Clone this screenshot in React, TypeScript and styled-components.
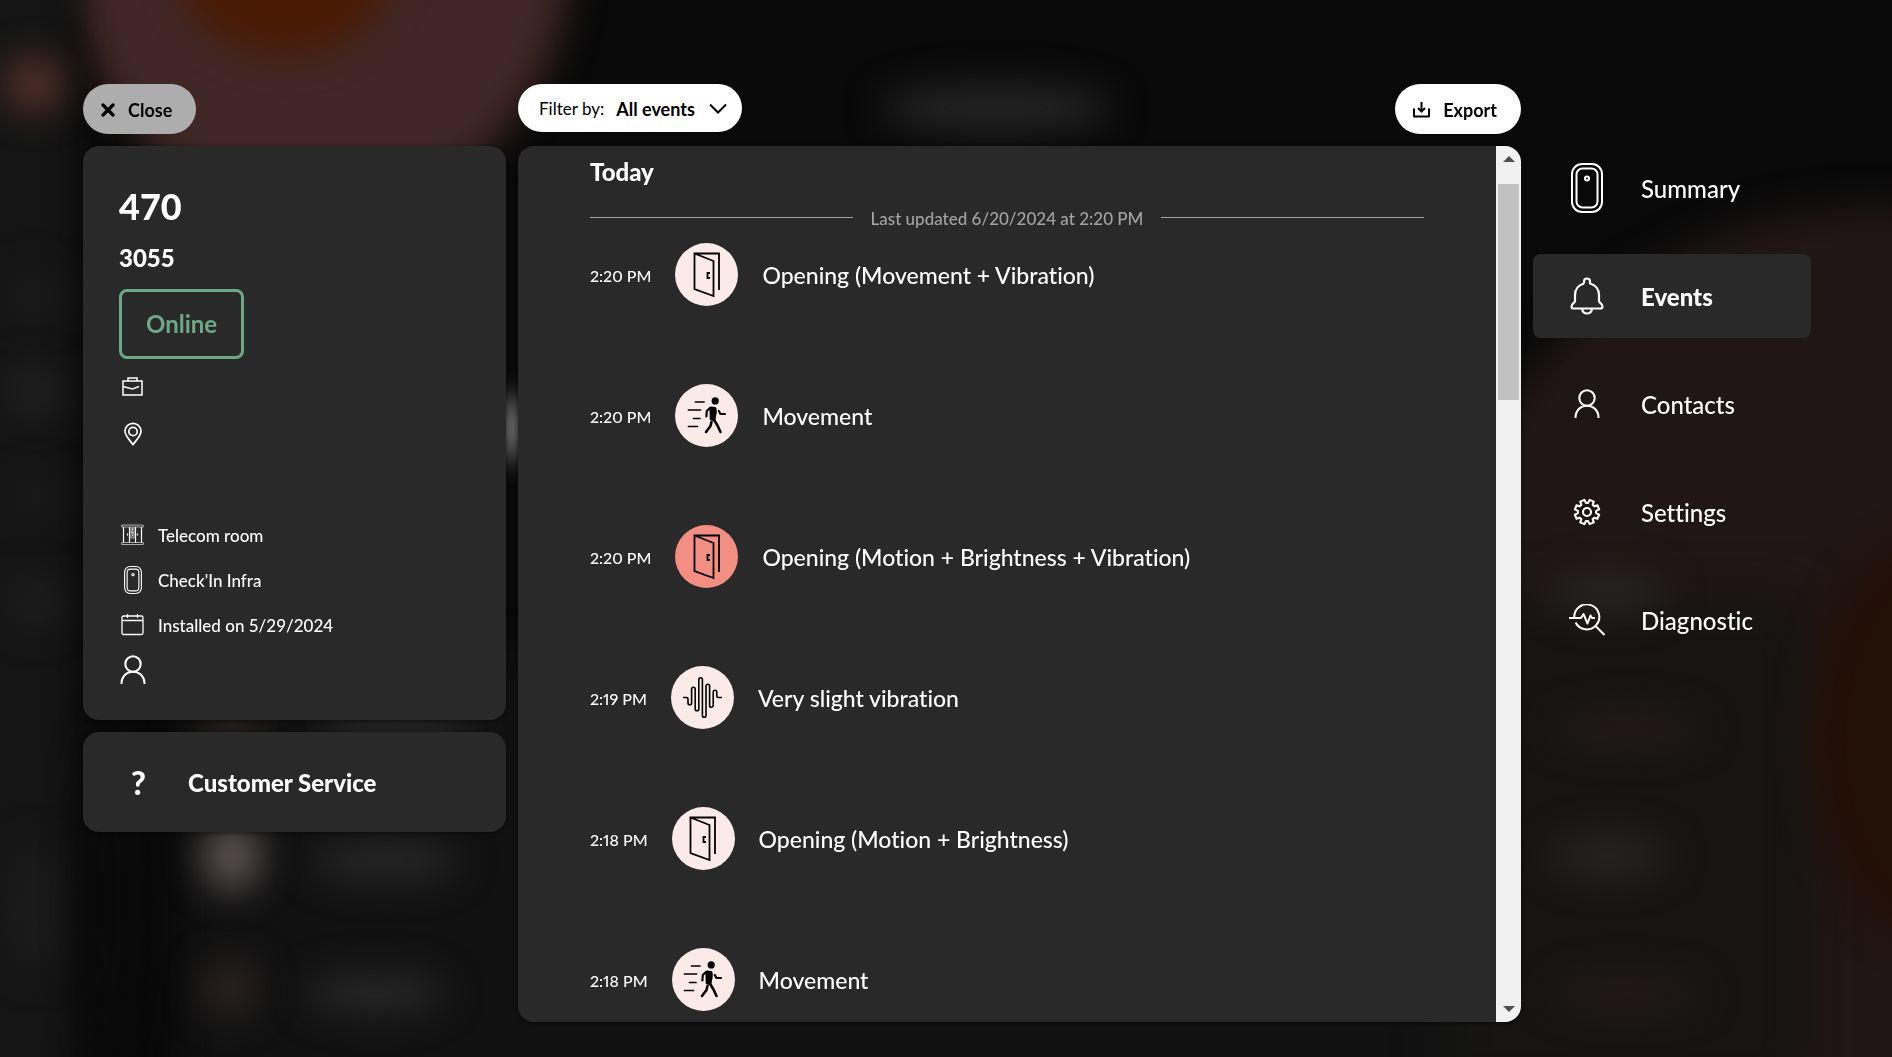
import React from 'react';
import styled, { createGlobalStyle } from 'styled-components';

const GlobalStyle = createGlobalStyle`
  *, *::before, *::after { box-sizing: border-box; }
  body {
    margin: 0;
    background: #090909;
    color: #fff;
    font-family: Lato, "Open Sans", sans-serif;
    font-size: 17px;
    font-weight: 500;
    font-variant-ligatures: none;
    line-height: 24px;
  }
  button, select { font: inherit; color: inherit; }
  h1, h2, p, ul, ol { margin: 0; padding: 0; }
  ul, ol { list-style: none; }
  svg { display: block; }
`;

/* ---------- blurred page behind the dialog ---------- */

const Backdrop = styled.div`
  position: fixed;
  inset: 0;
  overflow: hidden;
  background: #090909;
`;

interface GlowProps {
  $x: string;
  $y: string;
  $w: number;
  $h: number;
  $color: string;
  $blur?: number;
  $square?: boolean;
}

const Glow = styled.span<GlowProps>`
  position: absolute;
  left: ${(p) => p.$x};
  top: ${(p) => p.$y};
  width: ${(p) => p.$w}px;
  height: ${(p) => p.$h}px;
  transform: translate(-50%, -50%);
  border-radius: ${(p) => (p.$square ? '0' : '50%')};
  background: ${(p) => p.$color};
  filter: blur(${(p) => p.$blur ?? 18}px);
`;

const glows: GlowProps[] = [
  { $x: '54%', $y: '92%', $w: 1680, $h: 640, $color: '#111111', $square: true },
  { $x: '320px', $y: '-45px', $w: 500, $h: 520, $color: '#402725' },
  { $x: '285px', $y: '-45px', $w: 220, $h: 200, $color: '#4a1a03' },
  { $x: '20px', $y: '55%', $w: 110, $h: 1300, $color: '#151515', $square: true },
  { $x: '34px', $y: '84px', $w: 60, $h: 56, $color: '#553029' },
  { $x: '34px', $y: '28%', $w: 60, $h: 50, $color: '#1a1a1a' },
  { $x: '34px', $y: '37%', $w: 60, $h: 50, $color: '#1f1f1f' },
  { $x: '34px', $y: '47%', $w: 60, $h: 40, $color: '#1a1a1a' },
  { $x: '34px', $y: '57%', $w: 60, $h: 50, $color: '#1d1d1d' },
  { $x: '34px', $y: '86%', $w: 60, $h: 130, $color: '#1b1b1b' },
  { $x: '110px', $y: '85%', $w: 60, $h: 360, $color: '#0a0a0a' },
  { $x: '996px', $y: '108px', $w: 230, $h: 50, $color: '#242424' },
  { $x: '510px', $y: '428px', $w: 30, $h: 66, $color: '#808080', $blur: 14 },
  { $x: '232px', $y: '856px', $w: 60, $h: 70, $color: '#5a5250' },
  { $x: '232px', $y: '726px', $w: 70, $h: 30, $color: '#30231f' },
  { $x: '395px', $y: '726px', $w: 160, $h: 30, $color: '#2c2c2c' },
  { $x: '385px', $y: '861px', $w: 150, $h: 44, $color: '#262626' },
  { $x: '230px', $y: '988px', $w: 60, $h: 60, $color: '#292220' },
  { $x: '375px', $y: '993px', $w: 140, $h: 44, $color: '#262626' },
  { $x: '99%', $y: '62%', $w: 880, $h: 900, $color: '#201615' },
  { $x: '86%', $y: '80%', $w: 360, $h: 500, $color: '#161514', $square: true, $blur: 24 },
  { $x: '102%', $y: '70%', $w: 240, $h: 400, $color: '#231007', $blur: 18 },
  { $x: '85%', $y: '56%', $w: 120, $h: 44, $color: '#252420' },
  { $x: '86%', $y: '69%', $w: 150, $h: 34, $color: '#231a18' },
  { $x: '85%', $y: '81%', $w: 120, $h: 44, $color: '#252420' },
  { $x: '86%', $y: '94%', $w: 150, $h: 34, $color: '#231a18' },
];

/* ---------- layout ---------- */

const Page = styled.main`
  position: relative;
  min-height: 100vh;
  padding: 84px 81px 35px 83px;
  display: grid;
  grid-template-columns: 423px minmax(0, 1fr) 278px;
  column-gap: 12px;
  align-items: start;
`;

const Column = styled.div`
  display: flex;
  flex-direction: column;
  gap: 12px;
`;

const Bar = styled.div`
  display: flex;
  justify-content: space-between;
  align-items: flex-start;
  height: 50px;
`;

const Pill = styled.button<{ $muted?: boolean }>`
  display: flex;
  align-items: center;
  gap: 13px;
  height: 50px;
  padding: 2px 24px 0 18px;
  border: 0;
  border-radius: 25px;
  background: ${(p) => (p.$muted ? '#adadad' : '#fff')};
  color: #000;
  font-size: 18px;
  font-weight: 700;
  cursor: pointer;
`;

const Filter = styled.div`
  position: relative;
  display: flex;
  align-items: center;
  height: 48px;
  padding: 2px 0 0 21px;
  border-radius: 24px;
  background: #fff;
  color: #000;
`;

const FilterLabel = styled.label`
  font-weight: 400;
`;

const FilterSelect = styled.select`
  appearance: none;
  height: 46px;
  width: 138px;
  padding: 0 0 0 12px;
  border: 0;
  background: transparent;
  font-size: 18px;
  font-weight: 700;
  outline: none;
`;

const FilterArrow = styled.span`
  position: absolute;
  right: 15px;
  top: 19px;
  pointer-events: none;
`;

const Card = styled.section`
  border-radius: 16px;
  background: #292929;
  padding: 36px 36px 28px;
  box-shadow: 0 1px 4px rgba(0, 0, 0, 0.5);
`;

const CardTitle = styled.h1`
  font-size: 36px;
  line-height: 48px;
  font-weight: 900;
`;

const CardSubtitle = styled.p`
  margin-top: 12px;
  font-size: 24px;
  line-height: 32px;
  font-weight: 900;
`;

const Status = styled.p`
  display: inline-flex;
  align-items: center;
  height: 70px;
  margin: 15px 0 3px;
  padding: 0 24px;
  border: 3px solid #6ca885;
  border-radius: 8px;
  color: #6ca885;
  font-size: 24px;
  font-weight: 700;
`;

const Facts = styled.ul<{ $row: number; $gapTop?: number }>`
  margin-top: ${(p) => p.$gapTop ?? 0}px;

  li {
    display: flex;
    align-items: center;
    gap: 12px;
    height: ${(p) => p.$row}px;
  }
`;

const FactIcon = styled.span`
  display: flex;
  justify-content: center;
  width: 27px;
`;

const FactText = styled.span`
  padding-top: 2px;
`;

const ServiceButton = styled.button`
  display: flex;
  align-items: center;
  gap: 30px;
  height: 100px;
  padding: 2px 36px 0;
  border: 0;
  border-radius: 16px;
  background: #292929;
  box-shadow: 0 1px 4px rgba(0, 0, 0, 0.5);
  font-size: 24px;
  font-weight: 900;
  text-align: left;
  cursor: pointer;
`;

const Mark = styled.span`
  width: 39px;
  text-align: center;
  font-size: 32px;
`;

/* ---------- events ---------- */

const Panel = styled.section`
  display: flex;
  height: calc(100vh - 181px);
  border-radius: 16px;
  background: #292929;
  overflow: hidden;
  box-shadow: 0 1px 4px rgba(0, 0, 0, 0.5);
`;

const PanelBody = styled.div`
  flex: 1;
  min-width: 0;
  overflow-y: auto;
  scrollbar-width: none;
  padding: 10px 72px 0;
`;

const Day = styled.h2`
  font-size: 24px;
  line-height: 32px;
  font-weight: 900;
`;

const Updated = styled.p`
  display: flex;
  align-items: center;
  gap: 18px;
  margin: 19px 0 12px;
  color: #a3a3a3;

  &::before, &::after {
    content: "";
    flex: 1;
    height: 1px;
    margin-bottom: 3px;
    background: #a3a3a3;
  }
`;

const EventList = styled.ol`
  display: flex;
  flex-direction: column;
  gap: 78px;
`;

const EventRow = styled.li`
  display: flex;
  align-items: center;
  gap: 24px;
  font-size: 23px;
`;

const Time = styled.time`
  padding-top: 2px;
  font-size: 16px;
  font-variant-numeric: proportional-nums;
`;

const Bubble = styled.span<{ $alert?: boolean }>`
  display: grid;
  place-items: center;
  width: 63px;
  height: 63px;
  border-radius: 50%;
  background: ${(p) => (p.$alert ? '#f28e82' : '#faeae8')};
  color: #000;
`;

const Scrollbar = styled.div`
  display: flex;
  flex-direction: column;
  align-items: center;
  width: 25px;
  padding: 10px 0;
  background: #f1f1f1;
`;

const Arrow = styled.span<{ $down?: boolean }>`
  width: 0;
  height: 0;
  border: 6px solid transparent;
  border-top-width: ${(p) => (p.$down ? 6 : 0)}px;
  border-bottom-width: ${(p) => (p.$down ? 0 : 6)}px;
  ${(p) => (p.$down ? 'border-top-color' : 'border-bottom-color')}: #505050;
`;

const Track = styled.div`
  flex: 1;
  display: grid;
  grid-template-rows: 5fr 14fr;
  width: 21px;
  padding-top: 22px;
`;

const Thumb = styled.div`
  background: #c1c1c1;
`;

/* ---------- side navigation ---------- */

const Nav = styled.nav`
  display: flex;
  flex-direction: column;
  gap: 24px;
  margin-top: 62px;
`;

const NavLink = styled.a<{ $active?: boolean }>`
  display: flex;
  align-items: center;
  gap: 36px;
  height: 84px;
  padding: 2px 36px 0;
  border-radius: 8px;
  background: ${(p) => (p.$active ? '#292929' : 'transparent')};
  color: #fff;
  font-size: 24px;
  font-weight: ${(p) => (p.$active ? 900 : 500)};
  text-decoration: none;
`;

const NavIcon = styled.span`
  display: flex;
  justify-content: center;
  width: 36px;
  margin-bottom: 3px;
`;

/* ---------- icons ---------- */

const line = { fill: 'none', stroke: 'currentColor' } as const;

const CloseIcon = () => (
  <svg width="14" height="14" viewBox="0 0 14 14" {...line} strokeWidth="3.2" strokeLinecap="round">
    <path d="M2 2l10 10M12 2L2 12" />
  </svg>
);

const ExportIcon = () => (
  <svg width="17" height="16" viewBox="0 0 17 16" {...line} strokeWidth="2">
    <path d="M1 6.500V14.500h15V6.500" strokeLinejoin="round" />
    <path d="M8.500 0v9M5 6l3.500 3.500L12 6" />
  </svg>
);

const ChevronIcon = () => (
  <svg width="18" height="12" viewBox="0 0 18 12" {...line} strokeWidth="2">
    <path d="M1 1.500l8 8 8-8" />
  </svg>
);

const BriefcaseIcon = () => (
  <svg width="21" height="19" viewBox="0 0 21 19" {...line} strokeWidth="1.500">
    <path d="M1 4h19v14H1zM6 4V1h9v3M1 9.500l9.500 2.500L17 9.500" />
  </svg>
);

const PinIcon = () => (
  <svg width="20" height="24" viewBox="0 0 20 24" {...line} strokeWidth="1.700">
    <path d="M10 22.500C7 18.500 2 14 2 9.300a8 8 0 0116 0C18 14 13 18.500 10 22.500z" />
    <circle cx="10" cy="9.500" r="4.200" />
  </svg>
);

const CabinetIcon = () => (
  <svg width="23" height="22" viewBox="0 0 23 22" {...line} strokeWidth="1.200">
    <rect x="0.600" y="1" width="21.800" height="2" rx="1" stroke="#aaa" />
    <rect x="0.600" y="18.500" width="21.800" height="2" rx="1" stroke="#aaa" />
    <path d="M2.500 3v15.500M20.500 3v15.500M8.500 3v15.500M14.500 3v15.500M6.500 9.500v2M16.500 9.500v2" />
    <path d="M10 4h3v10h-3z" stroke="#aaa" />
    <path d="M11.700 4.500l-1 4h1.600l-1 4" strokeWidth="0.800" />
  </svg>
);

const DeviceIcon = ({ width, height, stroke }: { width: number; height: number; stroke: number }) => (
  <svg width={width} height={height} viewBox="0 0 32 50" {...line} strokeWidth={stroke}>
    <rect x="1" y="1" width="30" height="48" rx="10" />
    <rect x="5.500" y="5.500" width="21" height="39" rx="6" />
    <circle cx="16" cy="15.500" r="2" />
  </svg>
);

const CalendarIcon = () => (
  <svg width="23" height="23" viewBox="0 0 23 23" {...line} strokeWidth="1.300">
    <rect x="1" y="3" width="21" height="18.500" rx="1.500" />
    <path d="M1 7.500h21M6.500 1v4M16.500 1v4" />
  </svg>
);

const PersonIcon = () => (
  <svg width="26" height="30" viewBox="0 0 26 30" {...line} strokeWidth="2.100">
    <circle cx="13" cy="9" r="7.700" />
    <path d="M1.500 29c0-7.500 5-12.300 11.500-12.300S24.500 21.500 24.500 29" />
  </svg>
);

const BellIcon = () => (
  <svg width="34" height="38" viewBox="0 0 34 38" {...line} strokeWidth="2.200" strokeLinejoin="round">
    <path d="M14 6.500V4.500a3 3 0 016 0v2c5.500 1.500 9 6 9 11.500v6c0 2 3.500 2.500 3.500 5.500 0 1.500-.8 2-2 2h-27c-1.200 0-2-.5-2-2C1.500 26.500 5 26 5 24v-6c0-5.500 3.500-10 9-11.500" />
    <path d="M12 32c.6 3 2.500 4.500 5 4.500s4.400-1.500 5-4.500" />
  </svg>
);

const GEAR_TEETH = 8;
const gearPath = Array.from({ length: GEAR_TEETH }, (_, i) => {
  const at = (r: number, deg: number) => {
    const a = ((i * 360) / GEAR_TEETH + deg) * (Math.PI / 180);
    return `${(14 + r * Math.sin(a)).toFixed(2)} ${(14 - r * Math.cos(a)).toFixed(2)}`;
  };
  return `${i ? 'L' : 'M'}${at(9.2, 7)}L${at(12.4, 12)}L${at(12.4, 33)}L${at(9.2, 38)}`;
}).join('');

const GearIcon = () => (
  <svg width="28" height="28" viewBox="0 0 28 28" {...line} strokeWidth="2.100" strokeLinejoin="round">
    <path d={`${gearPath}Z`} />
    <circle cx="14" cy="14" r="4" />
  </svg>
);

const DiagnosticIcon = () => (
  <svg width="36" height="32" viewBox="0 0 36 32" {...line} strokeWidth="2">
    <path d="M5.300 13.500a12.500 12.500 0 1 1 1.300 5" />
    <path d="M0 14h12l2.500-4 4 9.500 3-8 1.500 2.500h3M27 22.500l8.500 8.500" strokeLinejoin="round" />
  </svg>
);

const DoorIcon = () => (
  <svg width="28" height="46" viewBox="0 0 28 46" {...line} strokeWidth="1.800">
    <path d="M1.500 1.500L20.500 9v35L1.500 37zM1.500 1.500H26V38" />
    <path d="M17 21h-2.500v5H17" />
  </svg>
);

const WalkIcon = () => (
  <svg width="40" height="38" viewBox="0 0 40 38" {...line} strokeWidth="2" strokeLinecap="round" strokeLinejoin="round">
    <path d="M8.500 5h8.500M1.500 13h12M6.500 21.500h6.500M1.500 29.500h9" strokeWidth="1.700" />
    <circle cx="28.200" cy="3.900" r="3.600" fill="currentColor" stroke="none" />
    <path d="M24 11l4 .5.3 3.500-1.300 7.500-2.800-.5z" fill="currentColor" strokeWidth="3" />
    <path d="M23 11l-3.200 3-.4 5.500" strokeWidth="2.200" />
    <path d="M31.800 14l1.700 3h4.500" strokeWidth="2.200" />
    <path d="M24.500 25l-1 4-4.500 6M26.500 22l4 6.500 3 6.500" strokeWidth="2.600" />
  </svg>
);

const WaveIcon = () => (
  <svg width="39" height="44" viewBox="0 0 39 44" {...line} strokeWidth="1.600" strokeLinejoin="round">
    <path d="M0 21.500h3.500q1.500 0 1.500 2v3.500a1.800 1.800 0 0 0 3.600 0V13a1.800 1.800 0 0 1 3.600 0V33a1.800 1.800 0 0 0 3.600 0V3.500a1.800 1.800 0 0 1 3.600 0V39.500a1.800 1.800 0 0 0 3.600 0V10a1.800 1.800 0 0 1 3.600 0v19.500a1.800 1.800 0 0 0 3.600 0V16a1.800 1.800 0 0 1 3.600 0v3.500q0 2 1.500 2H39" />
  </svg>
);

/* ---------- data ---------- */

const eventIcons = { door: DoorIcon, walk: WalkIcon, wave: WaveIcon };

interface EventItem {
  time: string;
  label: string;
  icon: keyof typeof eventIcons;
  alert?: boolean;
}

const events: EventItem[] = [
  { time: '2:20 PM', label: 'Opening (Movement + Vibration)', icon: 'door' },
  { time: '2:20 PM', label: 'Movement', icon: 'walk' },
  { time: '2:20 PM', label: 'Opening (Motion + Brightness + Vibration)', icon: 'door', alert: true },
  { time: '2:19 PM', label: 'Very slight vibration', icon: 'wave' },
  { time: '2:18 PM', label: 'Opening (Motion + Brightness)', icon: 'door' },
  { time: '2:18 PM', label: 'Movement', icon: 'walk' },
];

const navItems = [
  { label: 'Summary', icon: <DeviceIcon width={32} height={50} stroke={2} /> },
  { label: 'Events', icon: <BellIcon />, active: true },
  { label: 'Contacts', icon: <PersonIcon /> },
  { label: 'Settings', icon: <GearIcon /> },
  { label: 'Diagnostic', icon: <DiagnosticIcon /> },
];

const facts = [
  { label: 'Telecom room', icon: <CabinetIcon /> },
  { label: "Check'In Infra", icon: <DeviceIcon width={18} height={28} stroke={2} /> },
  { label: 'Installed on 5/29/2024', icon: <CalendarIcon /> },
  { label: '', icon: <PersonIcon /> },
];

export default function App() {
  return (
    <>
      <GlobalStyle />
      <Backdrop aria-hidden="true">
        {glows.map((glow, i) => (
          <Glow key={i} {...glow} />
        ))}
      </Backdrop>
      <Page>
        <Column>
          <Bar>
            <Pill type="button" $muted>
              <CloseIcon />
              Close
            </Pill>
          </Bar>
          <Card>
            <CardTitle>470</CardTitle>
            <CardSubtitle>3055</CardSubtitle>
            <Status>Online</Status>
            <Facts $row={48}>
              <li><FactIcon><BriefcaseIcon /></FactIcon></li>
              <li><FactIcon><PinIcon /></FactIcon></li>
            </Facts>
            <Facts $row={45} $gapTop={54}>
              {facts.map((fact, i) => (
                <li key={i}>
                  <FactIcon>{fact.icon}</FactIcon>
                  {fact.label && <FactText>{fact.label}</FactText>}
                </li>
              ))}
            </Facts>
          </Card>
          <ServiceButton type="button">
            <Mark>?</Mark>
            Customer Service
          </ServiceButton>
        </Column>

        <Column>
          <Bar>
            <Filter>
              <FilterLabel htmlFor="event-filter">Filter by:</FilterLabel>
              <FilterSelect id="event-filter" defaultValue="all">
                <option value="all">All events</option>
              </FilterSelect>
              <FilterArrow><ChevronIcon /></FilterArrow>
            </Filter>
            <Pill type="button">
              <ExportIcon />
              Export
            </Pill>
          </Bar>
          <Panel>
            <PanelBody>
              <Day>Today</Day>
              <Updated>Last updated 6/20/2024 at 2:20 PM</Updated>
              <EventList>
                {events.map((event, i) => {
                  const Icon = eventIcons[event.icon];
                  return (
                    <EventRow key={i}>
                      <Time>{event.time}</Time>
                      <Bubble $alert={event.alert}><Icon /></Bubble>
                      <span>{event.label}</span>
                    </EventRow>
                  );
                })}
              </EventList>
            </PanelBody>
            <Scrollbar aria-hidden="true">
              <Arrow />
              <Track><Thumb /></Track>
              <Arrow $down />
            </Scrollbar>
          </Panel>
        </Column>

        <Nav aria-label="Device sections">
          {navItems.map((item) => (
            <NavLink
              key={item.label}
              href={`#${item.label.toLowerCase()}`}
              $active={item.active}
              aria-current={item.active ? 'page' : undefined}
            >
              <NavIcon>{item.icon}</NavIcon>
              {item.label}
            </NavLink>
          ))}
        </Nav>
      </Page>
    </>
  );
}
